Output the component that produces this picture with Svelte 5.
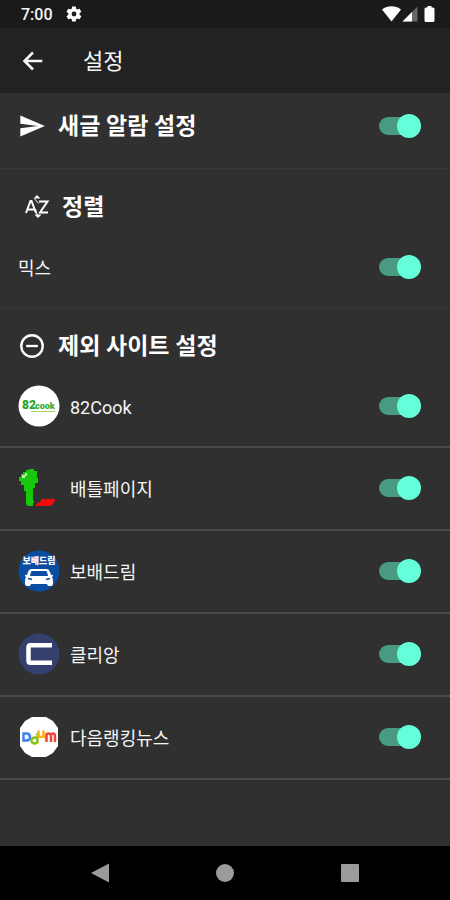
<script>
  let alarm = $state(true);
  let mix = $state(true);
  let sites = $state([
    { id: 'cook', name: '82Cook', on: true },
    { id: 'battle', name: '배틀페이지', on: true },
    { id: 'bobae', name: '보배드림', on: true },
    { id: 'clien', name: '클리앙', on: true },
    { id: 'daum', name: '다음랭킹뉴스', on: true }
  ]);
</script>

<div class="screen">
  <div class="status">
    <div class="group">
      <span class="time">7:00</span>
      <svg width="18" height="18" viewBox="0 0 24 24" aria-hidden="true">
        <path fill="#fff" fill-rule="evenodd" d="M19.4 13a7.500 7.500 0 0 0 0-2l2.100-1.600a.5.5 0 0 0 .1-.7l-2-3.400a.5.5 0 0 0-.6-.2l-2.500 1a7.300 7.300 0 0 0-1.700-1l-.4-2.700a.5.5 0 0 0-.5-.4h-4a.5.5 0 0 0-.5.4L9 5.100a7.700 7.700 0 0 0-1.700 1l-2.500-1a.5.5 0 0 0-.6.2l-2 3.400a.5.5 0 0 0 .1.700L4.500 11a8 8 0 0 0 0 2l-2.200 1.600a.5.5 0 0 0-.1.700l2 3.400c.1.200.4.300.6.200l2.500-1a7.300 7.300 0 0 0 1.700 1l.4 2.700c0 .2.200.4.500.4h4c.3 0 .5-.2.500-.4l.4-2.700a7.700 7.700 0 0 0 1.700-1l2.500 1c.2.100.5 0 .6-.2l2-3.400a.5.5 0 0 0-.1-.7zM12 15.200a3.200 3.200 0 1 1 0-6.400 3.200 3.200 0 0 1 0 6.400z" />
      </svg>
    </div>
    <svg width="54" height="18" viewBox="0 0 54 18" aria-hidden="true">
      <path fill="#fff" d="M0 4.500C5.500.2 13.500.2 19 4.500L9.500 16.500z" />
      <path fill="#666" d="M35.500 1.500v15H20.500z" />
      <path fill="#fff" d="M30 7v9.500h-9.500z" />
      <path fill="#fff" d="M45.500 1h4v1.500h1.500a1.500 1.500 0 0 1 1.500 1.500v11.500a1.500 1.500 0 0 1-1.500 1.500h-7a1.500 1.500 0 0 1-1.500-1.500V4A1.500 1.500 0 0 1 44 2.500h1.500z" />
    </svg>
  </div>

  <header>
    <button class="back" type="button" aria-label="뒤로">
      <svg width="28" height="28" viewBox="0 0 24 24" aria-hidden="true">
        <path fill="none" stroke="#f5f5f5" stroke-width="2.200" d="M20 12H5M12 4.700 4.700 12l7.300 7.300" />
      </svg>
    </button>
    <h1>설정</h1>
  </header>

  <main>
    <section class="alarm">
      <div class="row heading">
        <svg class="icon" width="28" height="28" viewBox="0 0 24 24" aria-hidden="true">
          <path fill="#fff" d="M2 21 23 12 2 3v7l15 2-15 2z" />
        </svg>
        <h2><label for="alarm">새글 알람 설정</label></h2>
        <input id="alarm" class="switch" type="checkbox" role="switch" bind:checked={alarm} />
      </div>
    </section>

    <section class="sort">
      <div class="row heading">
        <svg class="icon" width="32" height="28" viewBox="0 0 32 28" aria-hidden="true">
          <g fill="none" stroke="#fff" stroke-width="2">
            <path d="M8 20 12.500 8h1L18 20M10 16.500h6M21 8.500H29.500L22 19.500H30" />
          </g>
          <path fill="#fff" d="M15.500 5.500 19 2l3.500 3.500zM16.500 21.500 20 25l3.500-3.500z" />
          <path fill="none" stroke="#fff" d="m16.500 5.500 4 5M17.500 16l2 7" />
        </svg>
        <h2>정렬</h2>
      </div>
      <div class="row option">
        <label for="mix">믹스</label>
        <input id="mix" class="switch" type="checkbox" role="switch" bind:checked={mix} />
      </div>
    </section>

    <section class="sites">
      <div class="row heading">
        <svg class="icon" width="28" height="28" viewBox="0 0 24 24" aria-hidden="true">
          <g fill="none" stroke="#fff" stroke-width="2"><circle cx="12" cy="12" r="9.200" /><path d="M7 12h10" /></g>
        </svg>
        <h2>제외 사이트 설정</h2>
      </div>
      <ul>
        {#each sites as site (site.id)}
          <li class="row">
            <svg class="logo" width="42" height="42" viewBox="0 0 42 42" aria-hidden="true">
              {#if site.id === 'cook'}
                <circle cx="21" cy="21" r="20.500" fill="#fff" />
                <text x="4" y="24" font-size="12" font-weight="900" fill="#27a52f">82</text>
                <text x="17" y="23.500" font-size="9" font-weight="900" fill="#36a93a">cook</text>
                <path d="M13 26.500h24" stroke="#a8d86c" />
              {:else if site.id === 'battle'}
                <path fill="#18c80c" d="M11 2h5v2h3v7h1v5h-3v5h-2v13h1v2h-1v3h-5l-2-2V24H6v-6H3v-4H1v-4h2V7h2V5h3V3h3z" />
                <path fill="#b5f5a8" d="M7 6h2v3H7v2H4V8h3z" />
                <path fill="#f00c0c" d="M23 32h14v2l-4 5H18v-2l5-3z" />
              {:else if site.id === 'bobae'}
                <circle cx="21" cy="21" r="20.500" fill="#0b4da2" />
                <text x="21" y="13.500" font-size="9" font-weight="900" fill="#fff" text-anchor="middle">보배드림</text>
                <path fill="#fff" fill-rule="evenodd" d="M13 19h16q2 0 3 3l1 3q2-1 2 1l-1 1q1 2 1 4v2q0 3-2 3h-2q-2 0-2-2H13q0 2-2 2H9q-2 0-2-3v-2q0-2 1-4l-1-1q0-2 2-1l1-3q1-3 3-3zM14 21q-1 0-2 5h18q-1-5-2-5z" />
                <path stroke="#0b4da2" stroke-width="1.500" d="M10 28.500l4 1M32 28.500l-4 1" />
              {:else if site.id === 'clien'}
                <circle cx="21" cy="21" r="20.500" fill="#36406f" />
                <path fill="none" stroke="#fff" stroke-width="4.500" d="M34 12.300H12.500q-2 0-2 2v13.500q0 2 2 2H34" />
              {:else}
                <path fill="#fff" d="M14 1h14l7 4 5 7v18l-5 7-7 4H14l-7-4-5-7V12l5-7z" />
                <g fill="none" stroke-width="2.500">
                  <path stroke="#3c82f0" d="M5.500 17.500h3q3.500 0 3.500 3.500t-3.500 3.500h-3z" />
                  <path stroke="#8cc21f" d="M19.500 17v10.500M19.500 24.500a3 3 0 1 0-6 0 3 3 0 0 0 6 0" />
                  <path stroke="#ffb316" d="M20.500 14.500v4q0 2.500 2.500 2.500t2.500-2.500v-4M25.500 21h2" />
                  <path stroke="#ef463c" d="M28.500 26v-9M28.500 20q0-2.500 2.200-2.500T33 20v6M33 20q0-2.500 2-2.500t2 2.500v6" />
                </g>
              {/if}
            </svg>
            <label for={site.id}>{site.name}</label>
            <input id={site.id} class="switch" type="checkbox" role="switch" bind:checked={site.on} />
          </li>
        {/each}
      </ul>
    </section>
  </main>

  <nav>
    <button type="button" aria-label="이전">
      <svg width="20" height="20" viewBox="0 0 20 20"><path fill="#9b9b9b" d="M19 .5v19L1 10z" /></svg>
    </button>
    <button type="button" aria-label="홈">
      <svg width="20" height="20" viewBox="0 0 20 20"><circle cx="10" cy="10" r="9" fill="#9b9b9b" /></svg>
    </button>
    <button type="button" aria-label="최근 앱">
      <svg width="20" height="20" viewBox="0 0 20 20"><rect x="1" y="1" width="18" height="18" rx="1" fill="#9b9b9b" /></svg>
    </button>
  </nav>
</div>

<style>
  :global(body) {
    margin: 0;
    background: #303030;
  }
  .screen {
    display: flex;
    flex-direction: column;
    min-height: 100vh;
    background: #303030;
    color: #f5f5f5;
    font-family: Roboto, 'Noto Sans CJK KR', sans-serif;
    font-size: 18px;
    line-height: 28px;
  }
  .status {
    display: flex;
    align-items: center;
    justify-content: space-between;
    height: 28px;
    padding: 0 14px 0 21px;
    background: #1a1a1a;
  }
  .group {
    display: flex;
    align-items: center;
    gap: 12px;
  }
  .time {
    padding-top: 2px;
    font-size: 16px;
    font-weight: 500;
  }
  header {
    display: flex;
    align-items: center;
    gap: 36px;
    height: 65px;
    padding: 0 19px;
    background: #222;
  }
  h1,
  h2 {
    margin: 0;
    padding-top: 2px;
    font-size: 22px;
    font-weight: 400;
  }
  h2 {
    font-size: 23px;
    font-weight: 700;
    color: #fff;
  }
  button {
    display: flex;
    padding: 0;
    border: 0;
    background: none;
  }
  main {
    flex: 1;
  }
  .row {
    display: flex;
    align-items: center;
    box-sizing: border-box;
    padding: 0 29px 0 18px;
  }
  .row > label {
    padding-top: 4px;
  }
  .heading {
    height: 66px;
  }
  .icon {
    margin-right: 12px;
  }
  .alarm,
  .sort {
    border-bottom: 1px solid #393939;
  }
  .alarm {
    padding-bottom: 9px;
  }
  .sort,
  .sites {
    padding-top: 5px;
  }
  .option {
    height: 67px;
    padding-bottom: 14px;
  }
  ul {
    margin: 0;
    padding: 0;
    list-style: none;
  }
  li.row {
    height: 83px;
    padding-bottom: 2px;
    border-bottom: 2px solid #4a4a4a;
  }
  li.row:first-child {
    height: 69px;
    padding-bottom: 14px;
  }
  .logo {
    flex: none;
    margin-right: 10px;
  }
  .switch {
    appearance: none;
    position: relative;
    flex: none;
    width: 42px;
    height: 24px;
    margin: 0 0 0 auto;
  }
  .switch::before,
  .switch::after {
    content: '';
    position: absolute;
  }
  .switch::before {
    top: 3px;
    left: 0;
    width: 38px;
    height: 18px;
    border-radius: 9px;
    background: #666;
  }
  .switch::after {
    top: 0;
    left: 0;
    width: 24px;
    height: 24px;
    border-radius: 50%;
    background: #bbb;
  }
  .switch:checked::before {
    background: #499a83;
  }
  .switch:checked::after {
    left: 18px;
    background: #64ffda;
  }
  nav {
    display: flex;
    align-items: center;
    justify-content: space-between;
    height: 54px;
    padding: 0 90px;
    background: #000;
  }
</style>
